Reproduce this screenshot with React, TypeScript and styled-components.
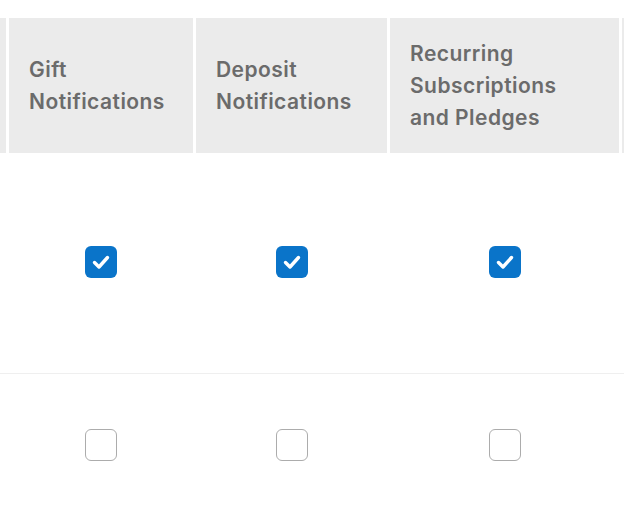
import styled, { createGlobalStyle } from "styled-components"

const GlobalStyle = createGlobalStyle`
  html, body {
    margin: 0;
    padding: 0;
    background: #ffffff;
  }
  body {
    font-family: Inter, "Noto Sans", "Liberation Sans", sans-serif;
    overflow: hidden;
  }
`

type Column = { key: string; title: string }

const columns: Column[] = [
  { key: "gift", title: "Gift Notifications" },
  { key: "deposit", title: "Deposit Notifications" },
  { key: "recurring", title: "Recurring Subscriptions and Pledges" },
]

const rows = [
  { id: "a", height: 220, values: [true, true, true] },
  { id: "b", height: 142, values: [false, false, false] },
]

const TEMPLATE = "6px 184px 191px 229px 2px"

export default function App() {
  return (
    <>
      <GlobalStyle />
      <Page>
        <HeaderRow>
          <HeaderCell />
          {columns.map((c) => (
            <HeaderCell key={c.key}>
              <HeaderText>{c.title}</HeaderText>
            </HeaderCell>
          ))}
          <HeaderCell />
        </HeaderRow>
        {rows.map((r, i) => (
          <BodyRow key={r.id} $height={r.height} $divider={i > 0}>
            <Cell />
            {r.values.map((checked, j) => (
              <Cell key={j}>
                <Checkbox $checked={checked} aria-checked={checked} role="checkbox">
                  {checked && (
                    <svg width="32" height="32" viewBox="0 0 32 32">
                      <path
                        d="M9.5 16.5 L14 21 L22.5 11.5"
                        fill="none"
                        stroke="#ffffff"
                        strokeWidth="3.4"
                        strokeLinecap="round"
                        strokeLinejoin="round"
                      />
                    </svg>
                  )}
                </Checkbox>
              </Cell>
            ))}
            <Cell />
          </BodyRow>
        ))}
      </Page>
    </>
  )
}

const Page = styled.div`
  width: 624px;
  padding-top: 18px;
`

const HeaderRow = styled.div`
  display: grid;
  grid-template-columns: ${TEMPLATE};
  column-gap: 3px;
  height: 135px;
`

const HeaderCell = styled.div`
  background-color: #ebebeb;
  display: flex;
  align-items: center;
  padding: 0 20px;
  overflow: hidden;

  &:first-child,
  &:last-child {
    padding: 0;
  }
`

const HeaderText = styled.div`
  font-size: 21px;
  font-weight: 600;
  line-height: 32px;
  color: #6b6b6b;
  letter-spacing: 0.45px;
`

type BodyRowProps = {
  $height: number
  $divider: boolean
}

const BodyRow = styled.div<BodyRowProps>`
  display: grid;
  grid-template-columns: ${TEMPLATE};
  column-gap: 3px;
  height: ${({ $height }) => $height}px;
  border-top: ${({ $divider }) => ($divider ? "1px solid #efefef" : "none")};
  box-sizing: border-box;
  padding-bottom: ${({ $divider }) => ($divider ? "0" : "2px")};
`

const Cell = styled.div`
  display: flex;
  align-items: center;
  justify-content: center;
`

type CheckboxProps = {
  $checked: boolean
}

const Checkbox = styled.div<CheckboxProps>`
  width: 32px;
  height: 32px;
  box-sizing: border-box;
  border-radius: 6px;
  background-color: ${({ $checked }) => ($checked ? "#0a74c9" : "#ffffff")};
  border: ${({ $checked }) => ($checked ? "none" : "1px solid #acacac")};
  display: flex;

  svg {
    display: block;
  }
`
